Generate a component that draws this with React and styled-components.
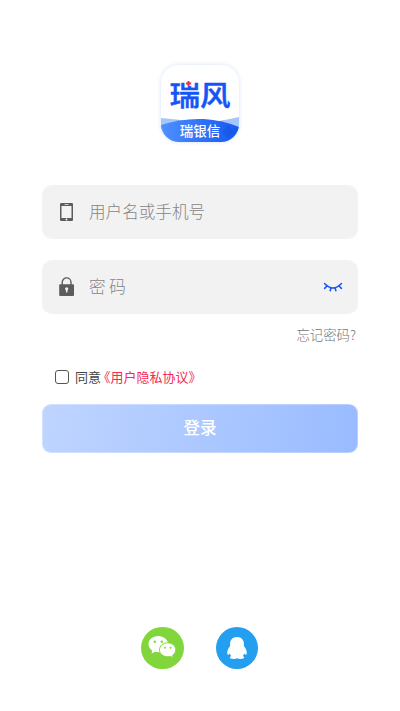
import { useState } from "react";
import styled, { createGlobalStyle, ThemeProvider } from "styled-components";

const theme = {
  colors: {
    blue: "#1554f6",
    field: "#f2f2f2",
    hint: "#858585",
    icon: "#5c5c5c",
    link: "#f52a55",
  },
  font: '"Noto Sans CJK SC", "Noto Sans", sans-serif',
};

const GlobalStyle = createGlobalStyle`
  * {
    box-sizing: border-box;
  }
  body {
    margin: 0;
    background: #fff;
    font-family: ${theme.font};
  }
`;

const Page = styled.main`
  width: 100%;
  max-width: 400px;
  height: 711px;
  padding: 65px 42px 0;
  display: flex;
  flex-direction: column;
  overflow: hidden;
`;

const Logo = styled.div`
  width: 78px;
  height: 77px;
  align-self: center;
  border-radius: 18px;
  box-shadow: 0 0 4px rgba(60, 120, 255, 0.22);
  overflow: hidden;
  flex: none;
  display: grid;
  grid-template: 53px 24px / 78px;
`;

const LogoName = styled.div`
  grid-area: 1 / 1;
  z-index: 1;
  padding-top: 14px;
  text-align: center;
  font-size: 30.5px;
  line-height: 30px;
  font-weight: 500;
  -webkit-text-stroke: 0.5px ${(props) => props.theme.colors.blue};
  color: ${(props) => props.theme.colors.blue};
  transform: scaleY(0.93);
`;

const LogoArt = styled.svg`
  grid-area: 1 / 1 / 3 / 2;
  width: 78px;
  height: 77px;
  z-index: ${(props) => props.$layer};
`;

const LogoSub = styled.div`
  grid-area: 2 / 1;
  z-index: 1;
  padding-top: 4px;
  text-align: center;
  font-size: 13.5px;
  line-height: 16px;
  font-weight: 500;
  color: #fff;
`;

const Fields = styled.div`
  margin-top: 43px;
  display: grid;
  gap: 21px;
`;

const FieldRow = styled.label`
  height: 54px;
  padding: 0 15px 0 14px;
  display: flex;
  align-items: center;
  background: ${(props) => props.theme.colors.field};
  border-radius: 10px;
`;

const FieldInput = styled.input`
  flex: 1;
  min-width: 0;
  height: 30px;
  margin-left: 11px;
  padding: 0 0 2px;
  border: 0;
  outline: 0;
  background: none;
  font-family: inherit;
  font-size: 16.6px;
  font-weight: 300;
  color: #333;
  &::placeholder {
    color: ${(props) => props.theme.colors.hint};
    opacity: 1;
  }
`;

const EyeButton = styled.button`
  display: flex;
  padding: 0;
  border: 0;
  background: none;
  cursor: pointer;
`;

const Forgot = styled.a`
  align-self: flex-end;
  margin: 10px 2px 1px 0;
  font-size: 13.4px;
  line-height: 20px;
  font-weight: 300;
  color: #757575;
`;

const Agreement = styled.label`
  margin: 22px 0 0 13px;
  height: 20px;
  display: flex;
  align-items: center;
  font-size: 13px;
  font-weight: 400;
  color: #444;
`;

const AgreementText = styled.span`
  line-height: 20px;
`;

const Check = styled.input`
  appearance: none;
  width: 14px;
  height: 14px;
  margin: 0 6px 0 0;
  border: 1px solid #555;
  border-radius: 3px;
  &:checked {
    background: ${(props) => props.theme.colors.blue};
  }
`;

const AgreementLink = styled(AgreementText)`
  margin-left: 3px;
  font-feature-settings: "halt";
  color: ${(props) => props.theme.colors.link};
`;

const LoginButton = styled.button`
  height: 49px;
  flex: none;
  margin-top: 17px;
  padding: 0 0 3px;
  border: 1px solid rgba(255, 255, 255, 0.3);
  border-radius: 9px;
  background: linear-gradient(100deg, #bfd5ff, #99bbff) border-box;
  font-family: inherit;
  font-size: 16.5px;
  font-weight: 500;
  color: #fff;
`;

const Socials = styled.div`
  margin: 173.5px 1px 0 0;
  display: flex;
  justify-content: center;
  gap: 32px;
`;

const SocialButton = styled.button`
  width: 42.5px;
  height: 42.5px;
  padding: 0;
  border: 0;
  border-radius: 50%;
  background: ${(props) => props.$color};
  svg {
    display: block;
  }
`;

const AppLogo = () => {
  return (
    <Logo>
      <LogoArt $layer={0} viewBox="0 0 78 77">
        <defs>
          <linearGradient id="wave" x1="0" y1="0" x2="1" y2="0">
            <stop offset="0" stopColor="#4e90ff" />
            <stop offset="1" stopColor="#1558ee" />
          </linearGradient>
        </defs>
        <path d="M0 53 Q18 54 35 58 Q58 57 78 52 V66 H0Z" fill="#a5c6fb" />
        <path d="M0 60 Q21 53 43 54 Q61 55 78 62 V77 H0Z" fill="url(#wave)" />
        <path d="M61 67l6-7 6 7-6 7z" fill="#1551df" opacity=".45" />
      </LogoArt>
      <LogoName>瑞风</LogoName>
      <LogoSub>瑞银信</LogoSub>
      <LogoArt $layer={2} viewBox="0 0 78 77">
        <path d="M25 14h5.5v7h-5.5z" fill="#fff" />
        <path d="M27.5 16v5M25 18.5h5" stroke="#f52b42" strokeWidth="2" />
      </LogoArt>
    </Logo>
  );
};

const PhoneIcon = () => {
  return (
    <svg width="22" height="22" viewBox="0 0 22 22">
      <rect x="4" y="2" width="13" height="18" rx="1.3" fill="#5c5c5c" />
      <path d="M5.5 5h10v12h-10z" fill="#f2f2f2" />
      <path d="M8.5 3.5h4" stroke="#ccc" />
      <circle cx="10.5" cy="18.5" r=".9" fill="#fff" />
    </svg>
  );
};

const LockIcon = () => {
  return (
    <svg width="22" height="22" viewBox="0 0 22 22">
      <path
        d="M6.2 9V6.3a4.4 4.4 0 0 1 8.8 0V9"
        fill="none"
        stroke="#5c5c5c"
        strokeWidth="1.4"
      />
      <rect x="3.2" y="8.2" width="14.8" height="11.8" rx="1" fill="#5c5c5c" />
      <circle cx="10.7" cy="12.8" r="1.6" fill="#f2f2f2" />
      <path d="M10.7 13v3.4" stroke="#f2f2f2" strokeWidth="1.5" />
    </svg>
  );
};

const EyeClosedIcon = () => {
  return (
    <svg width="20" height="12" viewBox="0 0 20 12">
      <path
        d="M1.5 2.5Q10 11.5 18.5 2.5M4 5 1.6 7.4M7.9 7 7.2 9.8M12.1 7l.8 2.8M16 5 18.4 7.4"
        fill="none"
        stroke="#1554f6"
        strokeWidth="1.5"
        strokeLinecap="round"
      />
    </svg>
  );
};

const WechatIcon = () => {
  return (
    <svg width="42" height="42" viewBox="0.5 0.5 42 42">
      <path
        d="M17.8 9.5c-5.5 0-9.8 3.6-9.8 8.2 0 2.5 1.4 4.9 3.7 6.4L11 27l3.5-1.7c1 .3 2.2.5 3.3.5 5.5 0 9.8-3.6 9.8-8.1s-4.3-8.2-9.8-8.2z"
        fill="#fff"
      />
      <path
        d="M27.2 16.3c-4.6 0-8.2 3.1-8.2 7s3.6 7 8.2 7c1 0 2-.1 2.9-.4l2.7 1.5-.7-2.5c2-1.3 3.2-3.3 3.2-5.6 0-3.9-3.5-7-8.1-7z"
        fill="#fff"
        stroke="#80d63b"
        strokeWidth="1"
      />
      <g fill="#80d63b">
        <circle cx="14.3" cy="15.2" r="1.2" />
        <circle cx="21.3" cy="15.2" r="1.2" />
        <circle cx="24.5" cy="21.3" r="1" />
        <circle cx="30" cy="21.3" r="1" />
      </g>
    </svg>
  );
};

const QQIcon = () => {
  return (
    <svg width="42" height="42" viewBox="0 0 42 42">
      <path
        d="M21 10c-4.3 0-6.9 2.9-6.9 6.7v2.4c-1.5 2-2.9 4.4-2.9 6.7 0 1.4.5 2 1.1 1.9.6-.1 1.1-.7 1.5-1.3.3 1 .8 1.9 1.5 2.7-.9.4-1.4 1-1.4 1.5 0 1 1.5 1.4 3.6 1.4 1.5 0 2.9-.4 3.5-1 .6.6 2 1 3.5 1 2.1 0 3.6-.4 3.6-1.4 0-.5-.5-1.1-1.4-1.5.7-.8 1.2-1.7 1.5-2.7.4.6.9 1.2 1.5 1.3.6.1 1.1-.5 1.1-1.9 0-2.3-1.4-4.7-2.9-6.7v-2.4c0-3.8-2.6-6.7-6.9-6.7z"
        fill="#fff"
      />
    </svg>
  );
};

export default function App() {
  const [agreed, setAgreed] = useState(false);
  const [visible, setVisible] = useState(false);

  return (
    <ThemeProvider theme={theme}>
      <GlobalStyle />
      <Page>
        <AppLogo />
        <Fields>
          <FieldRow>
            <PhoneIcon />
            <FieldInput placeholder="用户名或手机号" />
          </FieldRow>
          <FieldRow>
            <LockIcon />
            <FieldInput
              type={visible ? "text" : "password"}
              placeholder="密 码"
            />
            <EyeButton onClick={() => setVisible(!visible)}>
              <EyeClosedIcon />
            </EyeButton>
          </FieldRow>
        </Fields>
        <Forgot>忘记密码?</Forgot>
        <Agreement>
          <Check
            type="checkbox"
            checked={agreed}
            onChange={() => setAgreed(!agreed)}
          />
          <AgreementText>同意</AgreementText>
          <AgreementLink>《用户隐私协议》</AgreementLink>
        </Agreement>
        <LoginButton>登录</LoginButton>
        <Socials>
          <SocialButton $color="#80d63b">
            <WechatIcon />
          </SocialButton>
          <SocialButton $color="#249eef">
            <QQIcon />
          </SocialButton>
        </Socials>
      </Page>
    </ThemeProvider>
  );
}
